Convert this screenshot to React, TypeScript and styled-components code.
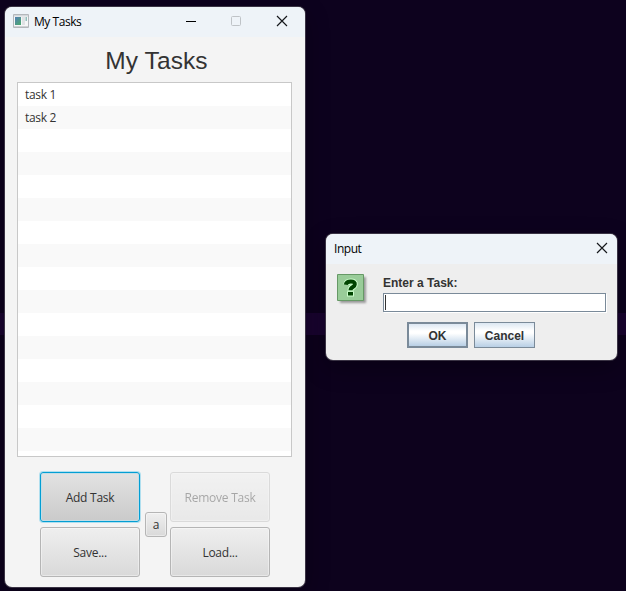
import React from "react";
import styled, { createGlobalStyle, css } from "styled-components";

const Global = createGlobalStyle`
  * { box-sizing: border-box; }
  html, body { margin: 0; padding: 0; overflow: hidden; }
`;

const Desktop = styled.main`
  position: relative;
  width: 626px;
  height: 591px;
  overflow: hidden;
  background: linear-gradient(to bottom, #0d021e 0 313px, #190430 313px 335px, #0d021d 335px);
  font-family: "Open Sans", "Noto Sans", sans-serif;
  font-size: 12px;
  color: #333;
`;

const Window = styled.section<{ $x: number; $y: number; $w: number; $h: number; $bg: string }>`
  position: absolute;
  left: ${(p) => p.$x}px;
  top: ${(p) => p.$y}px;
  width: ${(p) => p.$w}px;
  height: ${(p) => p.$h}px;
  display: flex;
  flex-direction: column;
  overflow: hidden;
  border-radius: 7px;
  background: ${(p) => p.$bg};
  box-shadow: 0 0 0 1px #3a3344, 0 8px 24px rgba(0, 0, 0, 0.3);
`;

const TitleBar = styled.header`
  display: flex;
  align-items: center;
  flex: none;
  height: 30px;
  padding: 0 8px;
  background: #eef3f8;
  color: #000;
`;

const Label = styled.span<{ $w: number; $shift?: number }>`
  display: block;
  width: ${(p) => p.$w}px;
  margin-top: ${(p) => p.$shift ?? 0}px;
  white-space: nowrap;
`;

const TitleText = styled(Label)`
  margin-right: auto;
  font-size: 12px;
  letter-spacing: -0.45px;
  line-height: 16px;
`;

const AppIcon = styled.svg`
  flex: none;
  margin: -2px 5px 0 0;
`;

const Controls = styled.div<{ $end: number }>`
  display: flex;
  gap: 34px;
  margin-right: ${(p) => p.$end}px;
  margin-top: -2px;
  svg { display: block; }
`;

const Body = styled.div`
  display: flex;
  flex-direction: column;
  align-items: center;
`;

const Heading = styled.h1`
  margin: 10px 0 7px 3px;
  font: 400 24.5px/28px "Liberation Sans", Arial, sans-serif;
  letter-spacing: 0.1px;
  color: #333;
`;

const TaskList = styled.ul`
  width: 275px;
  height: 375px;
  margin: 0 1px 0 0;
  padding: 0;
  overflow: hidden;
  list-style: none;
  border: 1px solid #c8c8c8;
  background: #fff;
`;

const TaskRow = styled.li`
  height: 23px;
  padding-left: 7px;
  line-height: 23px;
  letter-spacing: -0.3px;
  &:nth-child(even) { background: #f9f9f9; }
`;

const ButtonArea = styled.div`
  display: grid;
  grid-template-columns: 100px 22px 100px;
  grid-template-rows: 50px 50px;
  column-gap: 5px;
  row-gap: 5px;
  margin: 15px 0 0 0;
  width: 230px;
`;

const FxButton = styled.button<{ $focused?: boolean }>`
  height: 50px;
  width: 100px;
  padding: 2px 0 0;
  border: 1px solid #b5b5b5;
  border-radius: 3px;
  background: linear-gradient(#efefef, #d9d9d9);
  box-shadow: inset 0 0 0 1px rgba(255, 255, 255, 0.4);
  color: #333;
  font: 12px/16px "Open Sans", "Noto Sans", sans-serif;
  letter-spacing: -0.25px;
  &:disabled { opacity: 0.4; }
  ${(p) =>
    p.$focused &&
    css`
      border-color: #039ed3;
      background: linear-gradient(#e2e2e2, #cacaca);
      box-shadow: 0 0 0 1px #b0dfef, inset 0 0 0 1px #c3dde6;
    `}
`;

const SideButton = styled(FxButton)`
  grid-row: 1 / 3;
  grid-column: 2;
  align-self: center;
  width: 22px;
  height: 25px;
  padding: 0;
`;

const RightButton = styled(FxButton)`
  grid-column: 3;
  margin-left: -2px;
`;

const DialogBody = styled.div`
  display: flex;
  gap: 15px;
  padding: 10px 11px 0;
  font: 700 12px/14px "Liberation Sans", Arial, sans-serif;
`;

const Form = styled.div`
  display: flex;
  flex-direction: column;
  flex: 1;
`;

const QuestionIcon = styled.svg`
  flex: none;
  margin: -1px 0 0 -1px;
`;

const TextField = styled.div`
  height: 19px;
  margin-top: 3px;
  padding: 1px;
  border: 1px solid #7a8a99;
  background: #fff;
  box-shadow: 1px 1px 0 #fff;
`;

const Caret = styled.i`
  display: block;
  width: 1px;
  height: 15px;
  background: #333;
`;

const DialogActions = styled.div`
  display: flex;
  justify-content: center;
  gap: 6px;
  margin: 10px 1px 0 0;
`;

const SwingButton = styled.button<{ $default?: boolean }>`
  width: 61px;
  height: 26px;
  padding: 2px 0 0;
  border: ${(p) => (p.$default ? 2 : 1)}px solid #7a8a99;
  background: linear-gradient(#dce7f2 0, #fff 32%, #fff 42%, #b8cfe5 100%);
  color: #333;
  font: 700 12px/14px "Liberation Sans", Arial, sans-serif;
`;

const Close = () => (
  <svg width="12" height="12" viewBox="0 0 12 12">
    <path d="M1 1L11 11M11 1L1 11" stroke="#15171b" strokeWidth="1.15" />
  </svg>
);

const tasks = ["task 1", "task 2"];
const rows = Array.from({ length: 17 }, (_, i) => tasks[i] ?? "");

export default function App() {
  return (
    <Desktop>
      <Global />
      <Window $x={5} $y={7} $w={300} $h={580} $bg="#f4f4f4">
        <TitleBar>
          <AppIcon width="16" height="14" viewBox="0 0 16 14">
            <defs>
              <linearGradient id="pane" x2=".7" y2="1">
                <stop stopColor="#557fb5" />
                <stop offset="1" stopColor="#4ba574" />
              </linearGradient>
            </defs>
            <path d="M.5.5h15v13H.5z" fill="#f5f6f7" stroke="#b3b7bb" />
            <path d="M1 1h14v1.5H1z" fill="#d3d7db" />
            <path d="M2 3h6v8H2z" fill="url(#pane)" />
            <path d="M9 3h3v8H9z" fill="#dfe2e4" />
            <path d="M12.5 3H14v4h-1.5z" fill="#91bfbc" />
            <path d="M1 12h14v1H1z" fill="#cfd2d4" />
          </AppIcon>
          <TitleText $w={60}>My Tasks</TitleText>
          <Controls $end={9}>
            <svg width="11" height="12"><path d="M1 6.5h10" stroke="#000" /></svg>
            <svg width="12" height="12"><rect x="1.5" y="1.5" width="9" height="9" rx="1" fill="none" stroke="#bfc3c7" /></svg>
            <Close />
          </Controls>
        </TitleBar>
        <Body>
          <Heading>My Tasks</Heading>
          <TaskList>
            {rows.map((task, i) => <TaskRow key={i}>{task}</TaskRow>)}
          </TaskList>
          <ButtonArea>
            <FxButton $focused>Add Task</FxButton>
            <SideButton>a</SideButton>
            <RightButton disabled>Remove Task</RightButton>
            <FxButton>Save...</FxButton>
            <RightButton>Load...</RightButton>
          </ButtonArea>
        </Body>
      </Window>
      <Window $x={326} $y={234} $w={291} $h={126} $bg="#eeeeee">
        <TitleBar>
          <TitleText $w={60}>Input</TitleText>
          <Controls $end={1}><Close /></Controls>
        </TitleBar>
        <DialogBody>
          <QuestionIcon width="32" height="32" viewBox="0 0 32 32">
            <defs>
              <filter id="soft"><feGaussianBlur stdDeviation="1.3" /></filter>
            </defs>
            <path d="M4 4h26v26H4z" fill="#999" filter="url(#soft)" />
            <path d="M1.5 1.5h26v26h-26z" fill="#99cc99" stroke="#669966" />
            <g fill="none" strokeLinejoin="round">
              <path d="M10.3 11.8Q10.6 8.5 14.8 8.5T18.8 11.5C18.8 14.3 14.5 13.5 14.5 17.8" stroke="#ccffcc" strokeWidth="6" />
              <path d="M11 18.2h7v5.4h-7z" fill="#ccffcc" />
              <path d="M9.8 11.8Q10.3 8.5 14.8 8.5T18.8 11.5C18.8 14.3 14.5 13.5 14.5 17.2" stroke="#004400" strokeWidth="4" />
              <path d="M12 19h5v3.6h-5z" fill="#004400" />
            </g>
          </QuestionIcon>
          <Form>
            <Label $w={90} $shift={2}>Enter a Task:</Label>
            <TextField><Caret /></TextField>
          </Form>
        </DialogBody>
        <DialogActions>
          <SwingButton $default>OK</SwingButton>
          <SwingButton>Cancel</SwingButton>
        </DialogActions>
      </Window>
    </Desktop>
  );
}
